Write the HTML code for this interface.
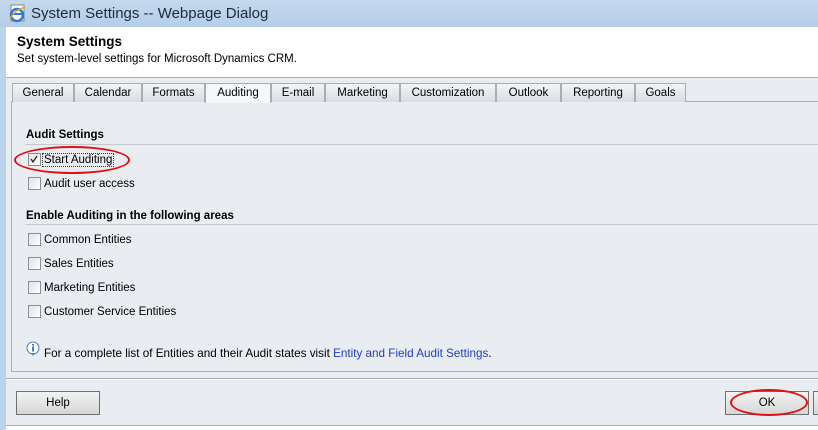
<!DOCTYPE html>
<html><head><meta charset="utf-8"><style>
*{margin:0;padding:0;box-sizing:border-box}
body{width:818px;height:430px;overflow:hidden;background:#bcd3ec;font-family:"Liberation Sans",sans-serif;font-size:11px;color:#000;position:relative}
.abs{position:absolute}
.title{left:0;top:0;width:818px;height:27px;background:linear-gradient(#c4d8ee,#b6cde8)}
.title span{position:absolute;left:31px;top:5px;font-size:15px;color:#1e2a3a}
.main{left:6px;top:27px;width:812px;height:403px;background:#e9ecf0}
.hdr{left:6px;top:27px;width:812px;height:50px;background:#fff}
.tab{position:absolute;top:83px;height:19px;background:linear-gradient(#f4f5f7,#d8dbe0);border:1px solid #a9adb3;border-bottom:none;text-align:center;line-height:18px;font-size:11.5px}
.tab.sel{background:#f6f7f9;height:20px}
.cb{position:absolute;width:13px;height:13px;border:1px solid #8a8f96;background:linear-gradient(135deg,#dfe2e6,#fff)}
.lbl{position:absolute;font-size:11.5px}
.btn{position:absolute;height:24px;border:1px solid #707070;background:linear-gradient(#f3f3f3,#d6d6d6);text-align:center;line-height:22px;font-size:11.5px}
</style></head><body>
<div class="abs title">
<svg class="abs" style="left:8px;top:4px" width="20" height="20" viewBox="0 0 20 20"><rect x="3" y="1" width="13" height="16" fill="#fff" stroke="#888"/><circle cx="9" cy="11" r="6" fill="none" stroke="#2a7bd6" stroke-width="2.5"/><path d="M4 10h10" stroke="#2a7bd6" stroke-width="2"/><path d="M2 15c4-8 10-10 15-12" stroke="#e8a21a" stroke-width="1.5" fill="none"/></svg>
<span>System Settings -- Webpage Dialog</span></div>
<div class="abs main"></div>
<div class="abs hdr"></div>
<div class="abs" style="left:17px;top:34px;font-size:13.5px;font-weight:bold">System Settings</div>
<div class="abs" style="left:17px;top:53px;font-size:11.5px">Set system-level settings for Microsoft Dynamics CRM.</div>
<div class="abs" style="left:6px;top:77px;width:812px;height:1px;background:#a9adb3"></div>
<div class="abs" style="left:11px;top:101px;width:807px;height:1px;background:#a9adb3"></div>
<div class="abs" style="left:11px;top:101px;width:1px;height:271px;background:#a9adb3"></div>
<div class="abs" style="left:11px;top:371px;width:807px;height:1px;background:#a9adb3"></div>
<div class="tab" style="left:12px;width:62px">General</div>
<div class="tab" style="left:74px;width:68px">Calendar</div>
<div class="tab" style="left:142px;width:63px">Formats</div>
<div class="tab sel" style="left:205px;width:66px">Auditing</div>
<div class="tab" style="left:271px;width:54px">E-mail</div>
<div class="tab" style="left:325px;width:75px">Marketing</div>
<div class="tab" style="left:400px;width:96px">Customization</div>
<div class="tab" style="left:496px;width:65px">Outlook</div>
<div class="tab" style="left:561px;width:74px">Reporting</div>
<div class="tab" style="left:635px;width:51px">Goals</div>
<div class="lbl" style="left:26px;top:129px;font-weight:bold">Audit Settings</div>
<div class="abs" style="left:25px;top:144px;width:793px;height:1px;background:#c5c8cc"></div>
<div class="cb" style="left:28px;top:153px"><svg width="11" height="11" style="position:absolute;left:0;top:0"><path d="M2 5l2 3 4-6" stroke="#222" stroke-width="1.3" fill="none"/></svg></div>
<div class="lbl" style="left:43px;top:154px;outline:1px dotted #333;padding:0 1px">Start Auditing</div>
<div class="abs" style="left:14px;top:146px;width:116px;height:28px;border:2px solid #e01010;border-radius:50%"></div>
<div class="cb" style="left:28px;top:177px"></div><div class="lbl" style="left:44px;top:178px">Audit user access</div>
<div class="lbl" style="left:26px;top:210px;font-weight:bold">Enable Auditing in the following areas</div>
<div class="abs" style="left:25px;top:224px;width:793px;height:1px;background:#c5c8cc"></div>
<div class="cb" style="left:28px;top:233px"></div><div class="lbl" style="left:44px;top:234px">Common Entities</div>
<div class="cb" style="left:28px;top:257px"></div><div class="lbl" style="left:44px;top:258px">Sales Entities</div>
<div class="cb" style="left:28px;top:281px"></div><div class="lbl" style="left:44px;top:282px">Marketing Entities</div>
<div class="cb" style="left:28px;top:305px"></div><div class="lbl" style="left:44px;top:306px">Customer Service Entities</div>
<svg class="abs" style="left:26px;top:341px" width="14" height="16" viewBox="0 0 14 16"><circle cx="7" cy="7" r="6" fill="#fff" stroke="#4a7fbf"/><path d="M5 12l2 3 2-3" fill="#4a7fbf"/><rect x="6.2" y="5.5" width="1.7" height="5" fill="#2a5ea8"/><rect x="6.2" y="3" width="1.7" height="1.6" fill="#2a5ea8"/></svg>
<div class="lbl" style="left:44px;top:347px;font-size:11.7px">For a complete list of Entities and their Audit states visit <span style="color:#1f3fc7">Entity and Field Audit Settings</span>.</div>
<div class="abs" style="left:6px;top:378px;width:812px;height:1px;background:#a9adb3"></div>
<div class="abs" style="left:6px;top:379px;width:812px;height:1px;background:#fff"></div>
<div class="btn" style="left:16px;top:391px;width:84px">Help</div>
<div class="btn" style="left:725px;top:391px;width:84px">OK</div>
<div class="btn" style="left:813px;top:391px;width:20px"></div>
<div class="abs" style="left:730px;top:389px;width:78px;height:27px;border:2px solid #e01010;border-radius:50%"></div>
<div class="abs" style="left:6px;top:425px;width:812px;height:1px;background:#a9adb3"></div>
<div class="abs" style="left:6px;top:426px;width:812px;height:4px;background:#fff"></div>
</body></html>
